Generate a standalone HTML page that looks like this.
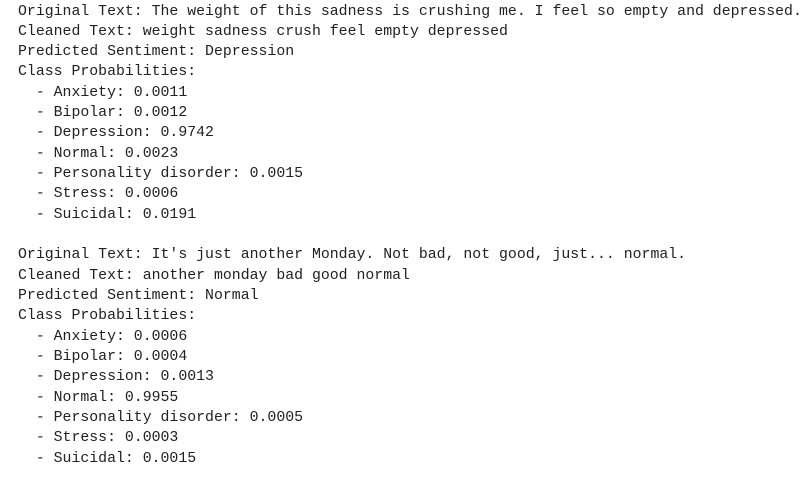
<!DOCTYPE html>
<html><head><meta charset="utf-8"><style>
html,body{margin:0;padding:0;background:#fff;width:811px;height:478px;overflow:hidden}
pre{margin:0;position:absolute;left:18px;top:1.5px;font-family:"Liberation Mono",monospace;font-size:14.85px;line-height:20.33px;color:#212121;white-space:pre}
</style></head><body><pre>Original Text: The weight of this sadness is crushing me. I feel so empty and depressed.
Cleaned Text: weight sadness crush feel empty depressed
Predicted Sentiment: Depression
Class Probabilities:
  - Anxiety: 0.0011
  - Bipolar: 0.0012
  - Depression: 0.9742
  - Normal: 0.0023
  - Personality disorder: 0.0015
  - Stress: 0.0006
  - Suicidal: 0.0191

Original Text: It's just another Monday. Not bad, not good, just... normal.
Cleaned Text: another monday bad good normal
Predicted Sentiment: Normal
Class Probabilities:
  - Anxiety: 0.0006
  - Bipolar: 0.0004
  - Depression: 0.0013
  - Normal: 0.9955
  - Personality disorder: 0.0005
  - Stress: 0.0003
  - Suicidal: 0.0015</pre></body></html>
